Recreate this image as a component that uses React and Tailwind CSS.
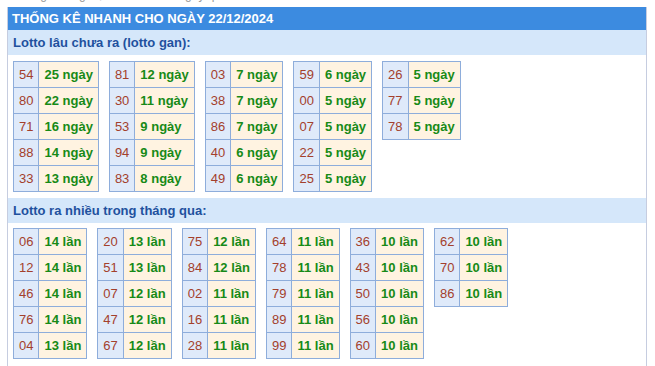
const gan = [
  [["54", "25 ngày"], ["80", "22 ngày"], ["71", "16 ngày"], ["88", "14 ngày"], ["33", "13 ngày"]],
  [["81", "12 ngày"], ["30", "11 ngày"], ["53", "9 ngày"], ["94", "9 ngày"], ["83", "8 ngày"]],
  [["03", "7 ngày"], ["38", "7 ngày"], ["86", "7 ngày"], ["40", "6 ngày"], ["49", "6 ngày"]],
  [["59", "6 ngày"], ["00", "5 ngày"], ["07", "5 ngày"], ["22", "5 ngày"], ["25", "5 ngày"]],
  [["26", "5 ngày"], ["77", "5 ngày"], ["78", "5 ngày"]],
];

const nhieu = [
  [["06", "14 lần"], ["12", "14 lần"], ["46", "14 lần"], ["76", "14 lần"], ["04", "13 lần"]],
  [["20", "13 lần"], ["51", "13 lần"], ["07", "12 lần"], ["47", "12 lần"], ["67", "12 lần"]],
  [["75", "12 lần"], ["84", "12 lần"], ["02", "11 lần"], ["16", "11 lần"], ["28", "11 lần"]],
  [["64", "11 lần"], ["78", "11 lần"], ["79", "11 lần"], ["89", "11 lần"], ["99", "11 lần"]],
  [["36", "10 lần"], ["43", "10 lần"], ["50", "10 lần"], ["56", "10 lần"], ["60", "10 lần"]],
  [["62", "10 lần"], ["70", "10 lần"], ["86", "10 lần"]],
];

function StatTable({ rows }) {
  return (
    <table className="border-collapse text-[13px] leading-none">
      <tbody>
        {rows.map(([num, val]) => (
          <tr key={num} className="h-[26px]">
            <td className="border border-[#8eaddb] bg-[#dfeafa] px-[5px] text-[#a3402c]">{num}</td>
            <td className="border border-[#8eaddb] bg-[#fff3e1] px-[5px] font-bold text-[#178a17] whitespace-nowrap">{val}</td>
          </tr>
        ))}
      </tbody>
    </table>
  );
}

function SubHeader({ children }) {
  return (
    <div className="h-[25px] bg-[#d5e7fa] pl-[5px] flex items-center text-[13px] font-bold text-[#1f519e]">
      {children}
    </div>
  );
}

export default function App() {
  return (
    <div className="w-[655px] h-[366px] overflow-hidden bg-white" style={{ fontFamily: '"Liberation Sans", Arial, sans-serif' }}>
      <div className="h-[7px] overflow-hidden">
        <div className="-mt-[14px] pl-[13px] text-[12px] leading-[18px] text-[#999]">Thống kê lô gan, lô tô ra nhiều ngày qua</div>
      </div>
      <div className="ml-[7px] w-[640px] border-x border-[#c6cde0]">
        <div className="h-[23px] bg-[#3c8be0] pl-[4px] flex items-center text-[13px] font-bold text-white">
          THỐNG KÊ NHANH CHO NGÀY 22/12/2024
        </div>
        <SubHeader>Lotto lâu chưa ra (lotto gan):</SubHeader>
        <div className="flex items-start gap-[10px] pl-[5px] pt-[6px] pb-[6px]">
          {gan.map((t, i) => (
            <StatTable key={i} rows={t} />
          ))}
        </div>
        <SubHeader>Lotto ra nhiều trong tháng qua:</SubHeader>
        <div className="flex items-start gap-[10px] pl-[5px] pt-[5px] pb-[10px]">
          {nhieu.map((t, i) => (
            <StatTable key={i} rows={t} />
          ))}
        </div>
      </div>
    </div>
  );
}
